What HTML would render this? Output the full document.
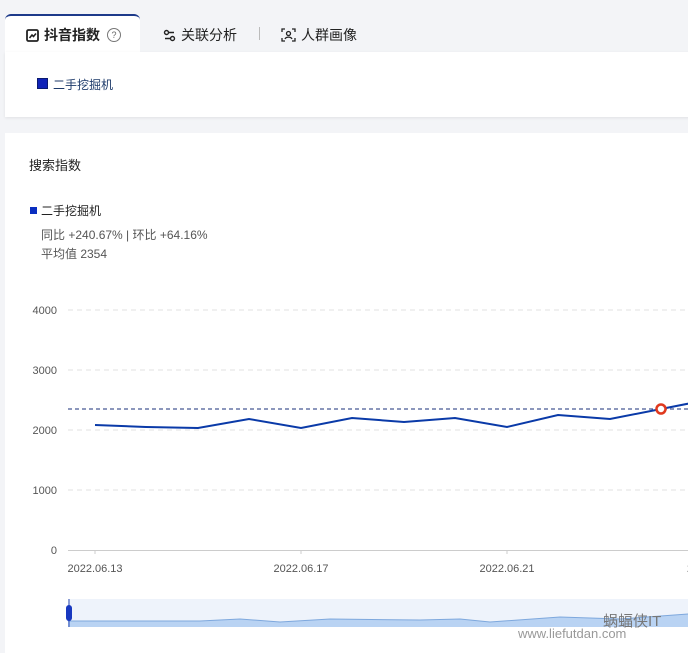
<!DOCTYPE html><html><head><meta charset="utf-8"><style>
body{margin:0;width:688px;height:649px;background:#f3f4f7;font-family:"Liberation Sans","Noto Sans CJK SC",sans-serif;position:relative;overflow:hidden;color:#222}
.abs{position:absolute}
</style></head><body>
<div class="abs" style="left:5px;top:14px;width:135px;height:40px;background:#fff;border-top:2px solid #1d3a8a;border-radius:6px 6px 0 0"></div>
<div class="abs" style="left:5px;top:52px;width:690px;height:65px;background:#fff;box-shadow:0 1px 3px rgba(0,0,0,.08)"></div>
<div class="abs" style="left:26px;top:25px;font-size:14px;font-weight:bold;display:flex;align-items:center;gap:5px">
<svg width="13" height="13" viewBox="0 0 13 13"><rect x="1" y="1" width="11" height="11" rx="1.5" fill="none" stroke="#222" stroke-width="1.8"/><path d="M3.5 9 L6 6 L7.5 7.5 L10 4.5" stroke="#222" stroke-width="1.6" fill="none"/></svg>抖音指数<span style="display:inline-block;width:12px;height:12px;border:1px solid #777;border-radius:50%;font-size:9px;line-height:12px;text-align:center;font-weight:normal;color:#666;margin-left:2px">?</span></div>
<div class="abs" style="left:163px;top:25px;font-size:14px;display:flex;align-items:center;gap:5px"><svg width="13" height="13" viewBox="0 0 13 13"><circle cx="3.5" cy="3.5" r="2" fill="none" stroke="#222" stroke-width="1.4"/><circle cx="9.5" cy="9.5" r="2" fill="none" stroke="#222" stroke-width="1.4"/><path d="M5.5 3.5H11M2 9.5H7.5" stroke="#222" stroke-width="1.4"/></svg>关联分析</div>
<div class="abs" style="left:259px;top:27px;width:1px;height:13px;background:#bbb"></div>
<div class="abs" style="left:281px;top:25px;font-size:14px;display:flex;align-items:center;gap:5px"><svg width="15" height="14" viewBox="0 0 15 14"><path d="M1 4V1H4M11 1H14V4M1 10V13H4M11 13H14V10" stroke="#222" stroke-width="1.3" fill="none"/><circle cx="7.5" cy="5.5" r="2" fill="none" stroke="#222" stroke-width="1.3"/><path d="M4 11C5 8.5 10 8.5 11 11" stroke="#222" stroke-width="1.3" fill="none"/></svg>人群画像</div>
<div class="abs" style="left:37px;top:78px;width:9px;height:9px;background:#1023b8;border:1px solid #0a1a70"></div>
<div class="abs" style="left:53px;top:76px;font-size:12px;color:#1d3a6a">二手挖掘机</div>
<div class="abs" style="left:5px;top:133px;width:690px;height:520px;background:#fff"></div>
<div class="abs" style="left:29px;top:155px;font-size:13px">搜索指数</div>
<div class="abs" style="left:30px;top:207px;width:7px;height:7px;background:#0a2ec0"></div>
<div class="abs" style="left:41px;top:202px;font-size:12px">二手挖掘机</div>
<div class="abs" style="left:41px;top:226px;font-size:12px;color:#555">同比 +240.67% | 环比 +64.16%</div>
<div class="abs" style="left:41px;top:245px;font-size:12px;color:#555">平均值 2354</div>
<svg class="abs" style="left:0;top:0" width="688" height="649">
<g font-size="11" fill="#555" text-anchor="end" font-family="Liberation Sans">
<text x="57" y="314">4000</text><text x="57" y="374">3000</text><text x="57" y="434">2000</text><text x="57" y="494">1000</text><text x="57" y="554">0</text></g>
<g stroke="#e2e2e2" stroke-dasharray="5,4"><path d="M68 310H688M68 370H688M68 430H688M68 490H688"/></g>
<path d="M68 550.5H688" stroke="#ccc"/>
<path d="M95 550v4M301 550v4M507 550v4" stroke="#ccc"/>
<g font-size="11" fill="#555" text-anchor="middle" font-family="Liberation Sans"><text x="95" y="572">2022.06.13</text><text x="301" y="572">2022.06.17</text><text x="507" y="572">2022.06.21</text><text x="690" y="572">2</text></g>
<path d="M68 409H688" stroke="#1a2f7a" stroke-dasharray="4,3"/>
<polyline fill="none" stroke="#0a3aa8" stroke-width="2" points="95,425 146,427 198,428 249,419 301,428 352,418 404,422 455,418 507,427 558,415 610,419 661,409 712,399"/>
<circle cx="661" cy="409" r="4.5" fill="#fff" stroke="#e0391e" stroke-width="2.5"/>
<rect x="68" y="599" width="620" height="28" fill="#eef3fb"/>
<path d="M68 621 L200 621 L240 619 L280 622 L330 619 L420 620 L460 619 L490 622 L560 617 L620 619 L688 614 V627 H68Z" fill="#b9d3f3"/>
<path d="M68 621 L200 621 L240 619 L280 622 L330 619 L420 620 L460 619 L490 622 L560 617 L620 619 L688 614" fill="none" stroke="#7ea8dd"/>
<path d="M69 599V627" stroke="#2a48b0"/>
<rect x="66" y="605" width="6" height="16" rx="3" fill="#1838c0"/>
<text x="603" y="626" font-size="15" fill="#777" font-family="Liberation Sans, Noto Sans CJK SC">蜗蝠侠IT</text>
<text x="518" y="638" font-size="13" fill="#999" font-family="Liberation Sans">www.liefutdan.com</text>
</svg>
</body></html>
